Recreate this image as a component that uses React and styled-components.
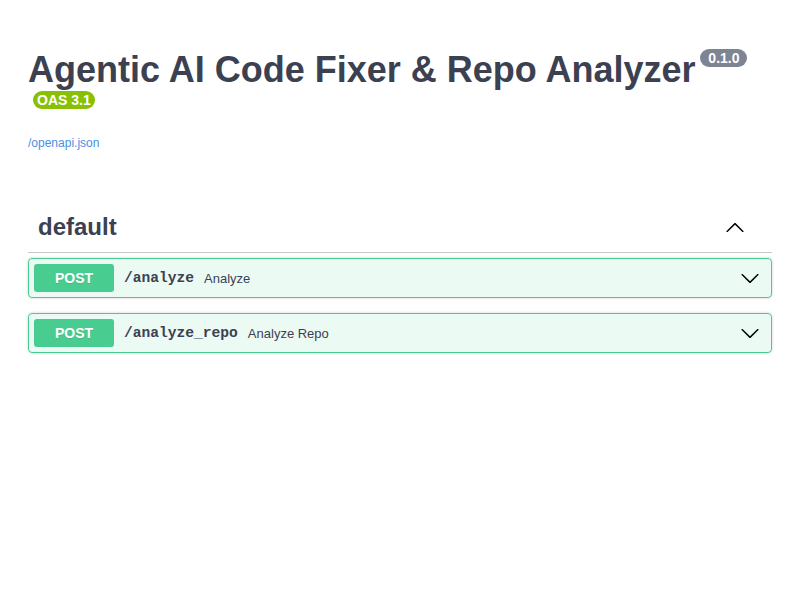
import React from 'react'
import styled, { createGlobalStyle } from 'styled-components'

const GlobalStyle = createGlobalStyle`
  body {
    margin: 8px;
    background: #fff;
    font-family: "Liberation Sans", Arial, sans-serif;
    color: #3b4151;
  }
`

// styled components
const Wrapper = styled.div`
  padding: 0 20px;
`

const Info = styled.div`
  margin: 41px 0 50px;
`

const Main = styled.hgroup`
  display: block;
  margin: 0 0 20px;
  font-size: 16px;
  line-height: 18px;
`

const Title = styled.h2`
  font-size: 36px;
  font-weight: 700;
  margin: 0;
  line-height: normal;
  color: #3b4151;
`

const Stamp = styled.small`
  display: inline-block;
  margin: 0 0 0 5px;
  padding: 2px 4px;
  border-radius: 57px;
  background: ${p => p.$color};
  vertical-align: top;
  font-size: 10px;
  line-height: 14px;
`

const StampText = styled.pre`
  margin: 0;
  padding: 0;
  font-family: "Liberation Sans", Arial, sans-serif;
  font-size: 14px;
  line-height: 14px;
  font-weight: 700;
  color: #fff;
`

const UrlLink = styled.a`
  color: #4990e2;
  font-size: 12px;
  text-decoration: none;
`

const TagHeader = styled.h3`
  display: flex;
  align-items: center;
  height: 30px;
  margin: 0 0 5px;
  padding: 10px 20px 10px 10px;
  border-bottom: 1px solid rgba(59, 65, 81, 0.3);
  font-size: 24px;
  font-weight: 700;
  color: #3b4151;
`

const TagName = styled.span`
  flex: 1;
`

const ArrowButton = styled.button`
  display: flex;
  align-items: center;
  border: none;
  background: none;
  padding: 0;
  margin-right: 7px;
  cursor: pointer;
`

const OpBlock = styled.div`
  margin: 0 0 15px;
  border: 1px solid #49cc90;
  border-radius: 4px;
  background: rgba(73, 204, 144, 0.1);
  box-shadow: 0 0 3px rgba(0, 0, 0, 0.19);
`

const Summary = styled.div`
  display: flex;
  align-items: center;
  padding: 5px;
`

const Method = styled.span`
  min-width: 80px;
  padding: 6px 0;
  border-radius: 3px;
  background: #49cc90;
  color: #fff;
  text-align: center;
  font-size: 14px;
  font-weight: 700;
  text-shadow: 0 1px 0 rgba(0, 0, 0, 0.1);
`

const Path = styled.span`
  padding: 0 10px;
  font-family: "Liberation Mono", "Courier New", monospace;
  font-size: 14.6px;
  font-weight: 700;
  color: #3b4151;
`

const Description = styled.span`
  flex: 1;
  font-size: 13px;
  color: #3b4151;
`

const Chevron = styled.svg`
  width: 20px;
  height: 20px;
  margin-right: ${p => p.$mr || 0}px;
  fill: #000;
`

const down = 'M17.418 6.109c.272-.268.709-.268.979 0s.271.701 0 .969l-7.908 7.83c-.27.268-.707.268-.979 0l-7.908-7.83c-.27-.268-.27-.701 0-.969.271-.268.709-.268.979 0L10 13.25l7.418-7.141z'
const up = 'M17.418 14.908c.272.268.709.268.979 0s.271-.701 0-.969l-7.908-7.83c-.27-.268-.707-.268-.979 0l-7.908 7.83c-.27.268-.27.701 0 .969.271.268.709.268.979 0L10 7.767l7.418 7.141z'

const ops = [
  { path: '/analyze', summary: 'Analyze' },
  { path: '/analyze_repo', summary: 'Analyze Repo' },
]

// component
export default function App() {
  return (
    <Wrapper>
      <GlobalStyle />
      <Info>
        <Main>
          <Title>
            Agentic AI Code Fixer &amp; Repo Analyzer
            <Stamp $color="#7d8492"><StampText> 0.1.0 </StampText></Stamp>
            <Stamp $color="#89bf04"><StampText>OAS 3.1</StampText></Stamp>
          </Title>
          <UrlLink href="#">/openapi.json</UrlLink>
        </Main>
      </Info>
      <section>
        <TagHeader>
          <TagName>default</TagName>
          <ArrowButton>
            <Chevron viewBox="0 0 20 20"><path d={up} /></Chevron>
          </ArrowButton>
        </TagHeader>
        {ops.map(op => (
          <OpBlock key={op.path}>
            <Summary>
              <Method>POST</Method>
              <Path>{op.path}</Path>
              <Description>{op.summary}</Description>
              <Chevron viewBox="0 0 20 20" $mr={6}><path d={down} /></Chevron>
            </Summary>
          </OpBlock>
        ))}
      </section>
    </Wrapper>
  )
}
